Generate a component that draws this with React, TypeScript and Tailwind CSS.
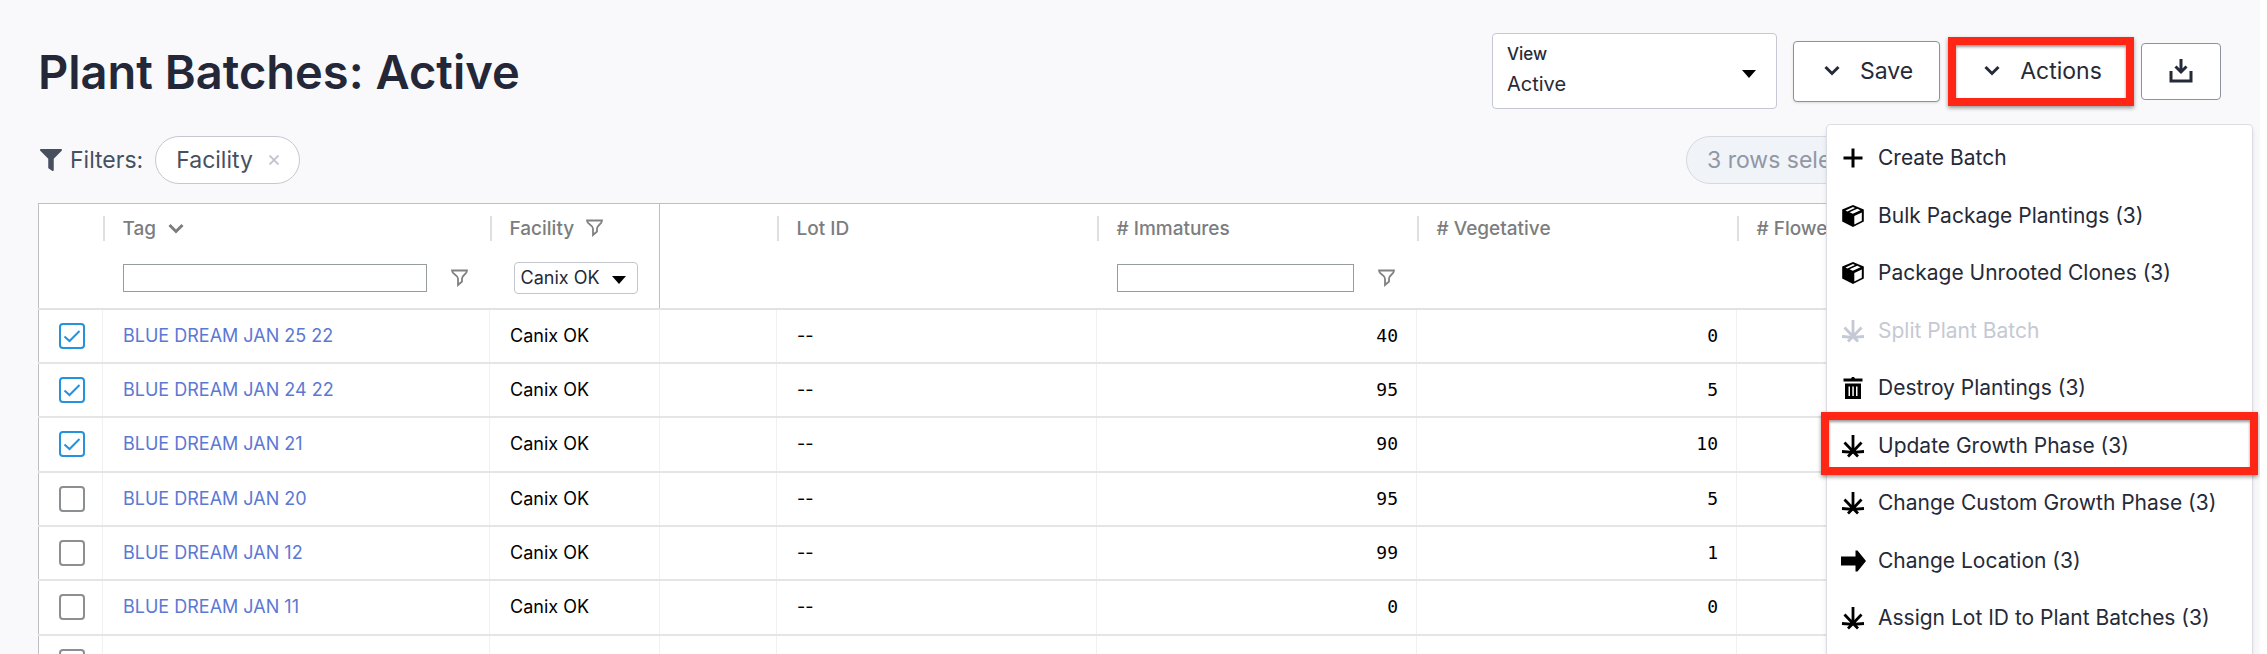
import React, { useState } from 'react';
import { FaFilter } from 'react-icons/fa';

interface Batch {
  tag: string;
  immature: string;
  vegetative: string;
}

const BATCHES: Batch[] = [
  { tag: 'BLUE DREAM JAN 25 22', immature: '40', vegetative: '0' },
  { tag: 'BLUE DREAM JAN 24 22', immature: '95', vegetative: '5' },
  { tag: 'BLUE DREAM JAN 21', immature: '90', vegetative: '10' },
  { tag: 'BLUE DREAM JAN 20', immature: '95', vegetative: '5' },
  { tag: 'BLUE DREAM JAN 12', immature: '99', vegetative: '1' },
  { tag: 'BLUE DREAM JAN 11', immature: '0', vegetative: '0' },
  { tag: 'BLUE DREAM JAN 10', immature: '98', vegetative: '2' },
];

const Chevron = () => (
  <svg viewBox="0 0 16 16" className="h-4 w-4" fill="none" stroke="currentColor" strokeWidth="3" aria-hidden="true">
    <path d="M1.5 4 8 10.5 14.5 4" />
  </svg>
);

const FilterOutline = () => (
  <svg viewBox="0 0 17 19" className="h-[19px] w-[17px] text-[#7f8183]" fill="none" stroke="currentColor" strokeWidth="1.8" aria-hidden="true">
    <path d="M1 1.500h15c0 4-5 4.500-5 8v3L7 16v-6.500c0-3.500-6-4-6-8z" />
  </svg>
);

const Caret = () => (
  <svg viewBox="0 0 14 8" className="pointer-events-none h-2 w-[14px] text-black" fill="currentColor" aria-hidden="true">
    <path d="M0 0h14L7 8z" />
  </svg>
);

const PlusIcon = () => (
  <svg viewBox="0 0 24 24" className="h-6 w-6" fill="none" stroke="currentColor" strokeWidth="3" aria-hidden="true">
    <path d="M12 2.500v19M2.500 12h19" />
  </svg>
);

const BoxIcon = () => (
  <svg viewBox="0 0 24 24" className="h-6 w-6" aria-hidden="true">
    <path d="M12 1 22.800 5.500v12L12 23 1.200 17.500v-12z" fill="currentColor" />
    <path d="m13.300 12 7.500-3.500v8.200l-7.500 3.700z" fill="white" />
    <path d="m4.500 6.500 7.500-3.400 2 .8-7.600 3.500zM8.500 8.300l7.700-3.500 3.300 1.400-7.700 3.600z" fill="white" />
  </svg>
);

const LeafIcon = () => (
  <svg viewBox="0 0 24 24" className="h-6 w-6" fill="none" stroke="currentColor" strokeWidth="2.8" aria-hidden="true">
    <path d="M12 1v17M3.500 8.500 12 17.500l8.500-9M1 17.500l11 .8 11-.8M7 22.500l5-5 5 5" />
  </svg>
);

const TrashIcon = () => (
  <svg viewBox="0 0 24 24" className="h-6 w-6" fill="currentColor" aria-hidden="true">
    <path d="M2.500 2.500h7.500l1-1.500h2l1 1.500h7.500v3h-19z" />
    <path fillRule="evenodd" d="M4 7.500h16V23H4zm3.500 3V20H9v-9.500zm3.800 0V20h1.500v-9.500zm3.700 0V20h1.500v-9.500z" />
  </svg>
);

const ArrowIcon = () => (
  <svg viewBox="0 0 26 24" className="h-6 w-[26px]" fill="currentColor" aria-hidden="true">
    <path d="M1 7.500h14.500V1.500h2L26 12l-8.500 10.500h-2v-6H1z" />
  </svg>
);

const DownloadIcon = () => (
  <svg viewBox="0 0 24 24" className="h-6 w-6" fill="none" stroke="currentColor" strokeWidth="3" aria-hidden="true">
    <path d="M2 12v10h20V12M12 0v12M6.500 7.500l5.500 5.500 5.500-5.500" />
  </svg>
);

interface MenuAction {
  label: string;
  icon: React.ReactNode;
  disabled?: boolean;
  highlighted?: boolean;
}

const MENU_ACTIONS: MenuAction[] = [
  { label: 'Create Batch', icon: <PlusIcon /> },
  { label: 'Bulk Package Plantings (3)', icon: <BoxIcon /> },
  { label: 'Package Unrooted Clones (3)', icon: <BoxIcon /> },
  { label: 'Split Plant Batch', icon: <LeafIcon />, disabled: true },
  { label: 'Destroy Plantings (3)', icon: <TrashIcon /> },
  { label: 'Update Growth Phase (3)', icon: <LeafIcon />, highlighted: true },
  { label: 'Change Custom Growth Phase (3)', icon: <LeafIcon /> },
  { label: 'Change Location (3)', icon: <ArrowIcon /> },
  { label: 'Assign Lot ID to Plant Batches (3)', icon: <LeafIcon /> },
];

const ActionsMenu = () => (
  <div className="absolute -right-8 top-[91px] z-20 flex h-[560px] w-[427px] flex-col rounded border border-[#dcdce4] bg-white pt-1 shadow-md">
    {MENU_ACTIONS.map(action => (
      <button
        key={action.label}
        disabled={action.disabled}
        className="relative flex h-[57px] shrink-0 items-center gap-3 pl-[13px] text-left text-[21px] text-[#262a38] odd:h-[58px] disabled:text-[#c5c9d3]"
      >
        <span className={`flex w-[26px] justify-center ${action.disabled ? 'text-[#c5c9d6]' : 'text-black'}`}>{action.icon}</span>
        {action.label}
        {action.highlighted && (
          <span className="absolute -inset-x-1.5 -top-[5px] h-[63px] border-8 border-[#ff2616] shadow-[0_2px_4px_rgba(0,0,0,0.4),inset_0_2px_3px_rgba(0,0,0,0.4)]" />
        )}
      </button>
    ))}
  </div>
);

// short divider on the left edge of a column heading
const HeadCell = ({ children }: { children?: React.ReactNode }) => (
  <div className="flex h-[25px] items-center gap-3 border-l-2 border-[#dddfe1] pl-[18px]">{children}</div>
);

export default function App() {
  const [selected, setSelected] = useState<string[]>(BATCHES.slice(0, 3).map(b => b.tag));

  const toggle = (tag: string) => {
    setSelected(prev => (prev.includes(tag) ? prev.filter(t => t !== tag) : [...prev, tag]));
  };

  return (
    <div className="h-screen overflow-hidden bg-white pr-[7px] font-['Inter',sans-serif] text-[#262a38]">
      <main className="h-full overflow-hidden bg-[#f9f9fc] pl-[38px] pr-[39px] pt-[33px]">
        <header className="relative flex h-[76px] items-center justify-between">
          <h1 className="text-[47px] font-semibold leading-none text-[#232738]">Plant Batches: Active</h1>

          <div className="flex items-center">
            <div className="relative mr-4 flex h-[76px] w-[285px] flex-col rounded border border-[#c5c8d4] bg-white">
              <label htmlFor="view" className="pl-3.5 pt-2.5 text-[17px] font-medium leading-5">View</label>
              <select id="view" className="w-full appearance-none bg-transparent pl-3.5 text-xl leading-10 outline-none">
                <option>Active</option>
              </select>
              <span className="pointer-events-none absolute right-5 top-9"><Caret /></span>
            </div>

            <button className="mr-2 flex h-[61px] w-[147px] items-center justify-center gap-5 rounded border border-[#8d92a0] bg-white pl-1 text-[23px] shadow-sm">
              <Chevron />
              Save
            </button>

            <button className="mr-[7px] flex h-[69px] w-[186px] items-center justify-center gap-5 border-8 border-[#ff2616] bg-white pl-1 text-[23px] shadow-[0_2px_4px_rgba(0,0,0,0.4),inset_0_2px_3px_rgba(0,0,0,0.4)]">
              <Chevron />
              Actions
            </button>

            <button aria-label="Download" className="flex h-[57px] w-20 items-center justify-center rounded border border-[#8d92a0] bg-white">
              <DownloadIcon />
            </button>
          </div>

          <ActionsMenu />
        </header>

        <div className="mb-[19px] mt-[27px] flex items-center justify-between pl-0.5 text-[23px]">
          <div className="flex items-center text-[#47505f]">
            <FaFilter className="mr-2 h-[22px] w-[22px]" />
            <span className="mr-3">Filters:</span>
            <button className="flex h-12 items-center gap-4 rounded-full border border-[#c5c8d0] bg-white px-5">
              Facility
              <svg viewBox="0 0 10 10" className="h-2.5 w-2.5 text-[#c0c3cd]" fill="none" stroke="currentColor" strokeWidth="1.8" aria-hidden="true">
                <path d="m.5.5 9 9M9.500.5l-9 9" />
              </svg>
            </button>
          </div>
          <div className="flex h-12 w-[535px] items-center rounded-full border border-[#d6dae0] bg-[#f0f3f7] pl-5 text-[#9297a5]">3 rows selected</div>
        </div>

        <table className="w-full table-fixed border-collapse border-l border-t border-[#bcbfc3] bg-white text-lg text-black">
          <colgroup>
            <col className="w-16" />
            <col className="w-[387px]" />
            <col className="w-[170px]" />
            <col className="w-[117px]" />
            <col className="w-80" />
            <col className="w-80" />
            <col className="w-80" />
            <col />
          </colgroup>
          <thead className="text-left text-[19px] text-[#7b7d80]">
            <tr className="h-[105px] border-b-2 border-[#e0e2e4] align-top">
              <th />
              <th className="pt-3 font-medium">
                <HeadCell>
                  Tag <Chevron />
                </HeadCell>
                <div className="mt-[23px] flex items-center gap-6 pl-5">
                  <input aria-label="Tag filter" className="h-7 w-[304px] border border-[#979c9f] bg-white" />
                  <FilterOutline />
                </div>
              </th>
              <th className="border-r border-[#bcbfc3] pt-3 font-medium">
                <HeadCell>
                  Facility <FilterOutline />
                </HeadCell>
                <div className="relative ml-6 mt-[21px] flex w-[124px] items-center">
                  <select aria-label="Facility filter" className="h-8 w-full appearance-none rounded-sm border border-[#c3c6ca] pl-1.5 text-lg font-normal text-[#262a38]">
                    <option>Canix OK</option>
                  </select>
                  <span className="pointer-events-none absolute right-3 pt-1"><Caret /></span>
                </div>
              </th>
              <th />
              <th className="pt-3 font-medium">
                <HeadCell>Lot ID</HeadCell>
              </th>
              <th className="pt-3 font-medium">
                <HeadCell># Immatures</HeadCell>
                <div className="mt-[23px] flex items-center gap-6 pl-5">
                  <input aria-label="Immatures filter" className="h-7 w-[237px] border border-[#979c9f] bg-white" />
                  <FilterOutline />
                </div>
              </th>
              <th className="pt-3 font-medium">
                <HeadCell># Vegetative</HeadCell>
              </th>
              <th className="pt-3 font-medium">
                <HeadCell># Flowering</HeadCell>
              </th>
            </tr>
          </thead>
          <tbody>
            {BATCHES.map(batch => {
              const isChecked = selected.includes(batch.tag);
              return (
                <tr key={batch.tag} className="h-[54px] border-b-2 border-[#e3e5e6] nth-[3n]:h-[55px]">
                  <td className="pl-5">
                    <span className="relative flex h-[26px] w-[26px]">
                      <input
                        type="checkbox"
                        aria-label={batch.tag}
                        checked={isChecked}
                        onChange={() => toggle(batch.tag)}
                        className="h-[26px] w-[26px] appearance-none rounded border-2 border-[#8b8f92] bg-white checked:border-[#2492dc]"
                      />
                      {isChecked && (
                        <svg viewBox="0 0 26 26" className="pointer-events-none absolute inset-0 text-[#2492dc]" fill="none" stroke="currentColor" strokeWidth="2" aria-hidden="true">
                          <path d="m5.500 13.500 5 4.500L20.500 8" />
                        </svg>
                      )}
                    </span>
                  </td>
                  <td className="border-l border-[#f0f1f2] pl-5">
                    <a href="#" className="text-[#5b78d3]">{batch.tag}</a>
                  </td>
                  <td className="border-l border-[#f0f1f2] pl-5">Canix OK</td>
                  <td className="border-l border-[#f0f1f2]" />
                  <td className="border-l border-[#f0f1f2] pl-5">--</td>
                  <td className="border-l border-[#f0f1f2] pr-[18px] text-right font-['DejaVu_Sans_Mono',monospace]">{batch.immature}</td>
                  <td className="border-l border-[#f0f1f2] pr-[18px] text-right font-['DejaVu_Sans_Mono',monospace]">{batch.vegetative}</td>
                  <td className="border-l border-[#f0f1f2]" />
                </tr>
              );
            })}
          </tbody>
        </table>
      </main>
    </div>
  );
}
